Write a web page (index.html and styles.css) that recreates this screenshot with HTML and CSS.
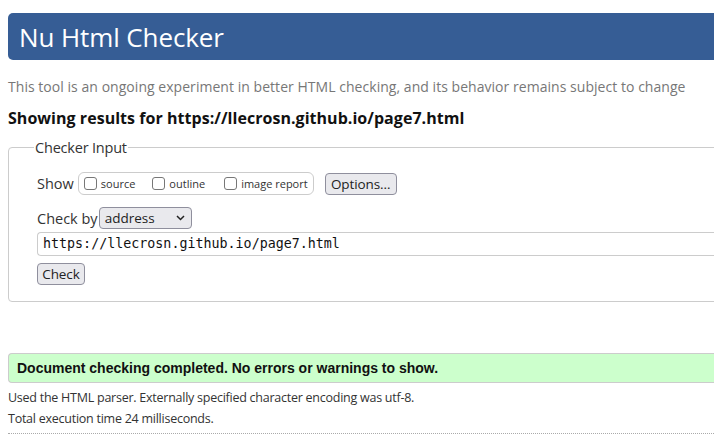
FILE: index.html
```html
<!DOCTYPE html>
<html>
<head>
<meta charset="utf-8">
<title>Nu Html Checker</title>
<link rel="stylesheet" href="styles.css">
</head>
<body>
<div class="page">
  <h1 class="title">Nu Html Checker</h1>
  <p class="intro">This tool is an ongoing experiment in better HTML checking, and its behavior remains subject to change</p>
  <p class="results">Showing results for https://llecrosn.github.io/page7.html</p>
  <fieldset class="input-box">
    <legend class="legend">Checker Input</legend>
    <div class="row show-row">
      <span class="label">Show</span>
      <span class="show-group">
        <label class="opt"><span class="cb"></span>source</label>
        <label class="opt"><span class="cb"></span>outline</label>
        <label class="opt"><span class="cb"></span>image report</label>
      </span>
      <span class="btn options">Options…</span>
    </div>
    <div class="row by-row">
      <span class="label">Check by</span>
      <span class="select">address
        <svg class="chev" width="9" height="6" viewBox="0 0 9 6"><path d="M1 1 L4.5 4.5 L8 1" fill="none" stroke="#222" stroke-width="1.5"/></svg>
      </span>
    </div>
    <div class="url">https://llecrosn.github.io/page7.html</div>
    <span class="btn check">Check</span>
  </fieldset>
  <div class="success">Document checking completed. No errors or warnings to show.</div>
  <p class="meta">Used the HTML parser. Externally specified character encoding was utf-8.</p>
  <p class="meta">Total execution time 24 milliseconds.</p>
  <div class="rule"></div>
</div>
</body>
</html>
```
FILE: styles.css
```css
html, body {
  margin: 0;
  padding: 0;
  overflow: hidden;
  background: #fff;
}
body {
  font-family: "Open Sans", "Noto Sans", sans-serif;
  color: #222;
}
.page {
  width: 900px;
  padding: 13px 0 0 8px;
}
.title {
  margin: 0;
  height: 47px;
  background: #365d95;
  color: #fff;
  border-radius: 5px;
  font-weight: normal;
  font-size: 26px;
  line-height: 49px;
  padding-left: 11px;
  box-sizing: border-box;
  letter-spacing: -0.1px;
}
.intro {
  margin: 17px 0 0;
  color: #777;
  font-size: 14px;
  line-height: 20px;
  letter-spacing: 0.04px;
}
.results {
  margin: 10px 0 0;
  font-weight: bold;
  font-size: 16px;
  line-height: 22px;
  color: #111;
  letter-spacing: 0.04px;
}
.input-box {
  margin: 9px 0 0;
  border: 1px solid #ccc;
  border-radius: 4px;
  padding: 14px 0 16px 28px;
  min-width: 0;
}
.legend {
  padding: 0 1px;
  margin-left: -3px;
  font-size: 14.5px;
  color: #333;
  letter-spacing: -0.2px;
}
.row {
  display: flex;
  align-items: center;
  font-size: 14.5px;
  color: #333;
}
.show-group {
  display: flex;
  align-items: center;
  margin-left: 4px;
  height: 23px;
  border: 1px solid #ccc;
  border-radius: 6px;
  padding: 0 5px;
  box-sizing: border-box;
  flex-shrink: 0;
}
.opt {
  display: flex;
  align-items: center;
  font-size: 11px;
  color: #333;
  white-space: nowrap;
  flex-shrink: 0;
}
.opt:nth-child(2) {
  margin-left: 17px;
}
.opt:nth-child(3) {
  margin-left: 19px;
}
.cb {
  width: 13px;
  height: 13px;
  border: 1px solid #777;
  border-radius: 3px;
  margin-right: 4px;
  box-sizing: border-box;
}
.btn {
  display: inline-block;
  background: #e9e9ed;
  border: 1px solid #8f8f9d;
  border-radius: 4px;
  font-size: 13.5px;
  color: #222;
  box-sizing: border-box;
  height: 22px;
  line-height: 20px;
  padding: 0 5px;
  letter-spacing: -0.1px;
}
.options {
  margin-left: 11px;
  width: 72px;
  text-align: center;
  flex-shrink: 0;
}
.show-row {
  margin-top: 1px;
}
.by-row {
  margin-top: 12px;
}
.select {
  display: flex;
  align-items: center;
  justify-content: space-between;
  margin-left: 1px;
  width: 93px;
  height: 22px;
  box-sizing: border-box;
  background: #e9e9ed;
  border: 1px solid #8f8f9d;
  border-radius: 4px;
  padding: 0 6px 0 5px;
  font-size: 13.5px;
  color: #222;
}
.url {
  margin-top: 3px;
  height: 24px;
  box-sizing: border-box;
  border: 1px solid #ccc;
  border-right: none;
  border-radius: 4px 0 0 4px;
  font-family: "DejaVu Sans Mono", monospace;
  font-size: 13.33px;
  line-height: 22px;
  padding-left: 5px;
  color: #111;
}
.check {
  margin-top: 7px;
  width: 48px;
  text-align: center;
  padding: 0;
}
.success {
  margin-top: 51px;
  height: 30px;
  box-sizing: border-box;
  background: #ccffcc;
  border: 1px solid #ccc;
  border-right: none;
  border-radius: 4px 0 0 4px;
  font-family: "Liberation Sans", Arial, sans-serif;
  font-weight: bold;
  font-size: 14px;
  line-height: 28px;
  padding-left: 8px;
  color: #111;
}
.meta {
  margin: 0;
  font-size: 12.5px;
  color: #333;
  letter-spacing: -0.25px;
  line-height: 21px;
}
.success + .meta {
  margin-top: 4px;
}
.rule {
  margin-top: 4px;
  border-top: 1px dotted #aaa;
}
```
